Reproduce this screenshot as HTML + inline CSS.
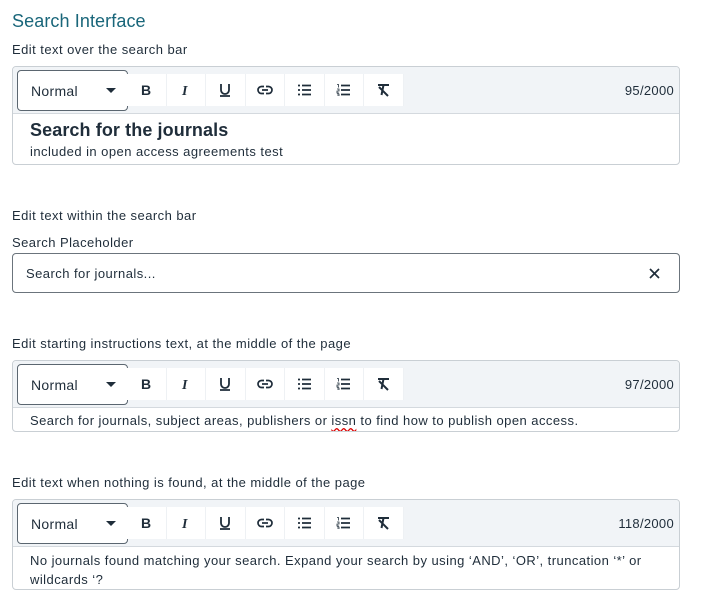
<!DOCTYPE html>
<html><head><style>
*{box-sizing:border-box;margin:0;padding:0}
body{width:707px;height:609px;background:#fff;font-family:"Liberation Sans",sans-serif;color:#1f2d3a;position:relative;overflow:hidden}
.a{position:absolute}
.lbl{font-size:13px;color:#1f2d3a;white-space:nowrap;letter-spacing:0.45px}
.ed{position:absolute;left:12px;width:668px;border:1px solid #c9cfd4;border-radius:4px;overflow:hidden}
.tb{height:47px;background:#f1f4f7;border-bottom:1px solid #d4d9de;position:relative}
.sel{position:absolute;left:4px;top:3px;width:111px;height:41px;border:1px solid #5b6670;border-radius:4px;background:#fff;font-size:14px;padding:12px 0 0 13px;letter-spacing:0.3px}
.sel:after{content:"";position:absolute;right:11px;top:17px;border:5px solid transparent;border-top:5px solid #1f2d3a;border-bottom:0}
.btns{position:absolute;left:114px;top:7px;height:32px;display:flex;background:#fff}
.btns div{width:39.5px;height:32px;border-right:1px solid #eef1f4;display:flex;align-items:center;justify-content:center}
.cnt{position:absolute;right:5px;top:16px;font-size:13px;letter-spacing:0.3px}
.body{font-size:13px;padding:0 17px;letter-spacing:0.45px}
</style></head><body>
<div class="a" style="left:12px;top:11px;font-size:18px;color:#19667a;letter-spacing:0.1px">Search Interface</div>
<div class="a lbl" style="left:12px;top:42px">Edit text over the search bar</div>

<div class="ed" style="top:66px;height:99px">
 <div class="tb"><div class="sel">Normal</div>
 <div class="btns">
  <div><svg width="14" height="14"><text x="2" y="12" font-size="14" font-weight="bold" font-family="Liberation Sans" fill="#1f2d3a">B</text></svg></div>
  <div><svg width="14" height="14"><text x="3" y="12" font-size="14" font-weight="bold" font-style="italic" font-family="Liberation Serif" fill="#1f2d3a">I</text></svg></div>
  <div><svg width="14" height="16"><path d="M3 2v6a4 4 0 0 0 8 0V2M2 14h10" stroke="#1f2d3a" stroke-width="1.8" fill="none"/></svg></div>
  <div><svg width="16" height="10"><rect x="1" y="1.5" width="14" height="7" rx="3.5" stroke="#1f2d3a" stroke-width="1.7" fill="none"/><path d="M5 5h6" stroke="#1f2d3a" stroke-width="1.7"/><rect x="7" y="0" width="2" height="3" fill="#fff"/><rect x="7" y="7" width="2" height="3" fill="#fff"/></svg></div>
  <div><svg width="15" height="12"><path d="M1 1.5h2M1 6h2M1 10.5h2M5 1.5h9M5 6h9M5 10.5h9" stroke="#1f2d3a" stroke-width="1.8"/></svg></div>
  <div><svg width="15" height="12"><path d="M5 1.5h9M5 6h9M5 10.5h9" stroke="#1f2d3a" stroke-width="1.8"/><path d="M1 0.5h1.5v3M1 5h2v2h-2v2h2M1 10h2v2h-2" stroke="#1f2d3a" stroke-width="0.8" fill="none"/></svg></div>
  <div><svg width="15" height="14"><path d="M2 2h11M7.5 2l-2 10M3 4l9 9" stroke="#1f2d3a" stroke-width="2" fill="none"/></svg></div>
 </div><div class="cnt">95/2000</div></div>
 <div class="body" style="padding-top:5px"><div style="font-size:18px;font-weight:bold;line-height:22px;letter-spacing:0.1px">Search for the journals</div><div style="margin-top:3px">included in open access agreements test</div></div>
</div>

<div class="a lbl" style="left:12px;top:208px">Edit text within the search bar</div>
<div class="a lbl" style="left:12px;top:235px">Search Placeholder</div>
<div class="a" style="left:12px;top:253px;width:668px;height:40px;border:1px solid #6b747c;border-radius:4px;font-size:13px;padding:12px 0 0 13px;letter-spacing:0.45px">Search for journals...
 <svg class="a" style="right:19px;top:14px" width="11" height="11"><path d="M1 1l9 9M10 1l-9 9" stroke="#1f2d3a" stroke-width="1.7"/></svg></div>

<div class="a lbl" style="left:12px;top:336px">Edit starting instructions text, at the middle of the page</div>
<div class="ed" style="top:360px;height:72px">
 <div class="tb"><div class="sel">Normal</div>
 <div class="btns">
  <div><svg width="14" height="14"><text x="2" y="12" font-size="14" font-weight="bold" font-family="Liberation Sans" fill="#1f2d3a">B</text></svg></div>
  <div><svg width="14" height="14"><text x="3" y="12" font-size="14" font-weight="bold" font-style="italic" font-family="Liberation Serif" fill="#1f2d3a">I</text></svg></div>
  <div><svg width="14" height="16"><path d="M3 2v6a4 4 0 0 0 8 0V2M2 14h10" stroke="#1f2d3a" stroke-width="1.8" fill="none"/></svg></div>
  <div><svg width="16" height="10"><rect x="1" y="1.5" width="14" height="7" rx="3.5" stroke="#1f2d3a" stroke-width="1.7" fill="none"/><path d="M5 5h6" stroke="#1f2d3a" stroke-width="1.7"/><rect x="7" y="0" width="2" height="3" fill="#fff"/><rect x="7" y="7" width="2" height="3" fill="#fff"/></svg></div>
  <div><svg width="15" height="12"><path d="M1 1.5h2M1 6h2M1 10.5h2M5 1.5h9M5 6h9M5 10.5h9" stroke="#1f2d3a" stroke-width="1.8"/></svg></div>
  <div><svg width="15" height="12"><path d="M5 1.5h9M5 6h9M5 10.5h9" stroke="#1f2d3a" stroke-width="1.8"/><path d="M1 0.5h1.5v3M1 5h2v2h-2v2h2M1 10h2v2h-2" stroke="#1f2d3a" stroke-width="0.8" fill="none"/></svg></div>
  <div><svg width="15" height="14"><path d="M2 2h11M7.5 2l-2 10M3 4l9 9" stroke="#1f2d3a" stroke-width="2" fill="none"/></svg></div>
 </div><div class="cnt">97/2000</div></div>
 <div class="body" style="padding-top:5px">Search for journals, subject areas, publishers or <span style="text-decoration:underline wavy #d00;text-underline-offset:2px">issn</span> to find how to publish open access.</div>
</div>

<div class="a lbl" style="left:12px;top:475px">Edit text when nothing is found, at the middle of the page</div>
<div class="ed" style="top:499px;height:91px">
 <div class="tb"><div class="sel">Normal</div>
 <div class="btns">
  <div><svg width="14" height="14"><text x="2" y="12" font-size="14" font-weight="bold" font-family="Liberation Sans" fill="#1f2d3a">B</text></svg></div>
  <div><svg width="14" height="14"><text x="3" y="12" font-size="14" font-weight="bold" font-style="italic" font-family="Liberation Serif" fill="#1f2d3a">I</text></svg></div>
  <div><svg width="14" height="16"><path d="M3 2v6a4 4 0 0 0 8 0V2M2 14h10" stroke="#1f2d3a" stroke-width="1.8" fill="none"/></svg></div>
  <div><svg width="16" height="10"><rect x="1" y="1.5" width="14" height="7" rx="3.5" stroke="#1f2d3a" stroke-width="1.7" fill="none"/><path d="M5 5h6" stroke="#1f2d3a" stroke-width="1.7"/><rect x="7" y="0" width="2" height="3" fill="#fff"/><rect x="7" y="7" width="2" height="3" fill="#fff"/></svg></div>
  <div><svg width="15" height="12"><path d="M1 1.5h2M1 6h2M1 10.5h2M5 1.5h9M5 6h9M5 10.5h9" stroke="#1f2d3a" stroke-width="1.8"/></svg></div>
  <div><svg width="15" height="12"><path d="M5 1.5h9M5 6h9M5 10.5h9" stroke="#1f2d3a" stroke-width="1.8"/><path d="M1 0.5h1.5v3M1 5h2v2h-2v2h2M1 10h2v2h-2" stroke="#1f2d3a" stroke-width="0.8" fill="none"/></svg></div>
  <div><svg width="15" height="14"><path d="M2 2h11M7.5 2l-2 10M3 4l9 9" stroke="#1f2d3a" stroke-width="2" fill="none"/></svg></div>
 </div><div class="cnt">118/2000</div></div>
 <div class="body" style="padding-top:4px;line-height:19px">No journals found matching your search. Expand your search by using ‘AND’, ‘OR’, truncation ‘*’ or<br>wildcards ‘?</div>
</div>
</body></html>
